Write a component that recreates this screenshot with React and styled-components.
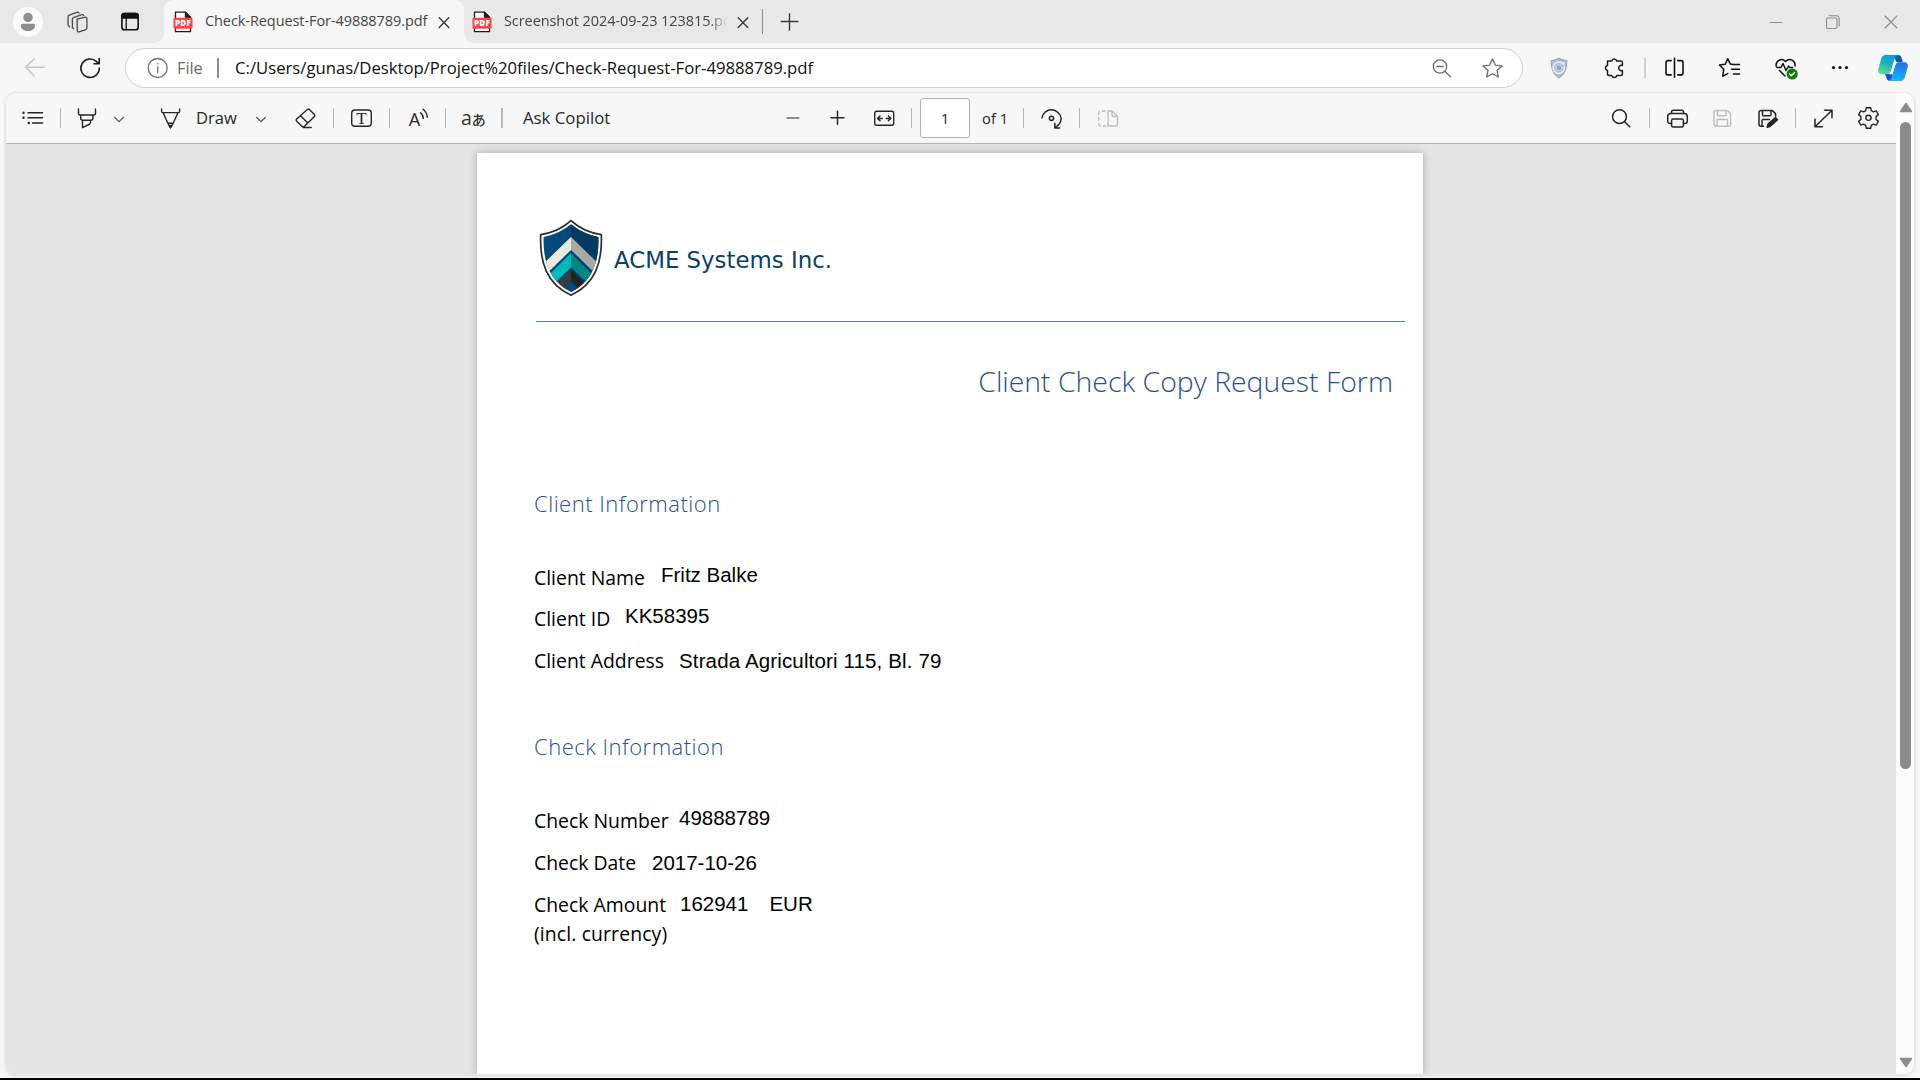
import React from "react";
import styled, { createGlobalStyle } from "styled-components";

const ui = '"Open Sans", "Noto Sans", sans-serif';

const Global = createGlobalStyle`
  * { box-sizing: border-box; }
  body { margin: 0; background: #f7f7f7; font-family: ${ui}; overflow: hidden; }
`;

const Window = styled.div`
  width: 1920px;
  height: 1080px;
  display: flex;
  flex-direction: column;
  background: #f7f7f7;
  border-bottom: 2px solid #000;
  overflow: hidden;
`;

const Icon = styled.svg`
  flex: none;
  width: ${(p) => p.$w || 24}px;
  height: ${(p) => p.$h || 24}px;
  margin-left: ${(p) => p.$ml || 0}px;
  margin-top: ${(p) => p.$mt || 0}px;
  fill: none;
  stroke: ${(p) => p.$c || "#262626"};
  stroke-width: ${(p) => p.$s || 1.4};
  stroke-linecap: round;
  stroke-linejoin: round;
  overflow: visible;
`;

const Divider = styled.div`
  flex: none;
  width: ${(p) => p.$w || 1}px;
  height: ${(p) => p.$h || 20}px;
  margin-left: ${(p) => p.$ml}px;
  background: ${(p) => p.$c || "#b8b8b8"};
`;

/* Tab strip */
const TabStrip = styled.header`
  height: 43px;
  flex: none;
  display: flex;
  align-items: center;
  background: #e8e8e8;
`;

const Avatar = styled.div`
  flex: none;
  width: 30px;
  height: 30px;
  margin-left: 13px;
  border-radius: 50%;
  background: #fbfbfb;
  display: flex;
`;

const Tab = styled.div`
  flex: none;
  display: flex;
  align-items: center;
  width: ${(p) => p.$w}px;
  height: 43px;
  margin-left: ${(p) => p.$ml || 0}px;
  border-radius: 9px 9px 0 0;
  background: ${(p) => (p.$active ? "#f7f7f7" : "transparent")};
  position: relative;
  &::before,
  &::after {
    content: "";
    display: ${(p) => (p.$active ? "block" : "none")};
    position: absolute;
    bottom: 0;
    width: 10px;
    height: 10px;
  }
  &::before {
    left: -10px;
    background: radial-gradient(circle at 0 0, #e8e8e8 9.5px, #f7f7f7 10px);
  }
  &::after {
    right: -10px;
    background: radial-gradient(circle at 100% 0, #e8e8e8 9.5px, #f7f7f7 10px);
  }
`;

const TabTitle = styled.span`
  flex: none;
  width: 224px;
  margin: 0 0 2px 12px;
  font-size: 14.5px;
  letter-spacing: -0.08px;
  line-height: 20px;
  color: #454545;
  white-space: nowrap;
  overflow: hidden;
  -webkit-mask-image: ${(p) => (p.$fade ? "linear-gradient(90deg, #000 205px, transparent 224px)" : "none")};
  mask-image: ${(p) => (p.$fade ? "linear-gradient(90deg, #000 205px, transparent 224px)" : "none")};
`;

/* Address row */
const AddressRow = styled.div`
  height: 49px;
  flex: none;
  display: flex;
  align-items: center;
`;

const AddressBar = styled.div`
  flex: none;
  display: flex;
  align-items: center;
  width: 1398px;
  height: 40px;
  margin-left: 22px;
  border: 1px solid #cfcfcf;
  border-radius: 20px;
  background: #fff;
`;

const AddressText = styled.span`
  flex: none;
  width: ${(p) => p.$w}px;
  margin-left: ${(p) => p.$ml}px;
  font-size: ${(p) => p.$fs || 16.7}px;
  line-height: 24px;
  color: ${(p) => p.$c};
  white-space: nowrap;
`;

/* PDF viewer */
const Viewer = styled.main`
  flex: none;
  display: flex;
  width: 1910px;
  height: 983px;
  margin-left: 5px;
  border-radius: 11px;
  overflow: hidden;
  border: 1px solid #e6e6e6;
  box-shadow: 0 1px 3px rgba(0, 0, 0, 0.12);
`;

const ViewerMain = styled.div`
  width: 1890px;
  display: flex;
  flex-direction: column;
`;

const Toolbar = styled.div`
  height: 51px;
  flex: none;
  display: flex;
  align-items: center;
  background: #f7f7f7;
  border-bottom: 1px solid #b4b4b4;
`;

const ToolText = styled.span`
  flex: none;
  width: ${(p) => p.$w}px;
  margin-left: ${(p) => p.$ml}px;
  font-size: ${(p) => p.$fs || 16.8}px;
  line-height: 24px;
  color: #262626;
  white-space: nowrap;
`;

const Translate = styled.span`
  flex: none;
  display: flex;
  align-items: baseline;
  width: 24px;
  margin-left: 15px;
  font: 400 19.5px/24px "Open Sans", sans-serif;
  color: #333;
  small {
    font: 500 14px/24px "Noto Sans CJK JP", sans-serif;
  }
`;

const PageInput = styled.div`
  flex: none;
  width: 50px;
  height: 40px;
  margin-left: 8px;
  border: 1px solid #b0b0b0;
  border-radius: 3px;
  background: #fff;
  font-size: 15px;
  line-height: 39px;
  text-align: center;
  color: #262626;
`;

const Canvas = styled.div`
  flex: 1;
  display: flex;
  justify-content: center;
  align-items: stretch;
  padding: 9px 2px 0 0;
  background: #e5e5e5;
  overflow: hidden;
`;

const ScrollTrack = styled.div`
  flex: 1;
  display: flex;
  flex-direction: column;
  align-items: center;
  padding: 9px 0 6px 1px;
  background: #fcfcfc;
`;

const Thumb = styled.div`
  width: 11px;
  height: 647px;
  margin: 9px 0 auto;
  border-radius: 6px;
  background: #8b8b8b;
`;

/* Document page */
const Page = styled.article`
  width: 946px;
  padding: 66px 17px 0 57px;
  background: #fff;
  box-shadow: 0 0 8px rgba(0, 0, 0, 0.28);
`;

const Brand = styled.div`
  display: flex;
  align-items: flex-start;
  height: 102px;
  padding-left: 6px;
`;

const BrandName = styled.div`
  margin: 21px 0 0 12px;
  font: 22.85px/40px "DejaVu Sans", sans-serif;
  color: #0a3f66;
  white-space: nowrap;
`;

const Rule = styled.div`
  height: 1px;
  margin: 0 1px 0 2px;
  background: #4f7bc0;
`;

const Title = styled.h1`
  margin: 39px 13px 0 0;
  font: 300 28.4px/40px ${ui};
  color: #2a5093;
  text-align: right;
  white-space: nowrap;
`;

const Heading = styled.h2`
  margin: ${(p) => p.$mt}px 0 45px;
  font: 300 22px/30px ${ui};
  letter-spacing: 0.5px;
  color: #2a5093;
`;

const Field = styled.div`
  display: flex;
  align-items: flex-start;
  height: ${(p) => p.$h}px;
`;

const Label = styled.div`
  width: ${(p) => p.$w}px;
  font: 400 19.4px/30px ${ui};
  letter-spacing: ${(p) => p.$ls || 0}px;
  color: #000;
  white-space: nowrap;
`;

const Value = styled.div`
  margin-top: ${(p) => -p.$lift || 0}px;
  margin-right: 21px;
  font: 20.5px/30px "Liberation Sans", Arial, sans-serif;
  letter-spacing: ${(p) => p.$ls || 0}px;
  color: #000;
  white-space: nowrap;
`;

function PdfIcon({ ml }) {
  return (
    <Icon $w={20} $h={22} $ml={ml} viewBox="0 0 20 22">
      <path d="M2.5 1.2h10l5 5v14.5h-15z" fill="#fff" stroke="#1c1c1c" strokeWidth="1.3" />
      <path d="M12.3 1.2v5.2h5.2z" fill="#1c1c1c" stroke="#1c1c1c" strokeWidth="1" />
      <rect x="0.5" y="6.7" width="19" height="11" rx="1.2" fill="#fb4446" stroke="none" />
      <text x="10" y="15.1" fill="#fff" stroke="none" fontFamily="Open Sans, sans-serif" fontSize="8" fontWeight="800" textAnchor="middle" letterSpacing="0.3">PDF</text>
    </Icon>
  );
}

const Close = ({ ml, c = "#3a3a3a" }) => (
  <Icon $w={12} $h={12} $ml={ml} $c={c} viewBox="0 0 12 12">
    <path d="M1.2 1.8l9.6 9.6M10.8 1.8L1.2 11.4" />
  </Icon>
);

const Chevron = ({ ml }) => (
  <Icon $w={12} $h={12} $ml={ml} $s={1.2} $c="#555" viewBox="0 0 12 12">
    <path d="M1.5 5.3L6 9.6l4.5-4.3" />
  </Icon>
);

function ShieldLogo() {
  const outer = "M31 .7C38 7 49 13 61.3 14.6C62.5 43 55 64 31 75.3C7 64 -.5 43 .7 14.6C13 13 24 7 31 .7z";
  const inner = "M31 4.3C39 10.5 48 15 58.4 16.9C59 41 53 61 31 72C9 61 3 41 3.6 16.9C14 15 23 10.5 31 4.3z";
  return (
    <Icon $w={62} $h={76} $mt={1} viewBox="0 0 62 76">
      <defs>
        <clipPath id="shield"><path d={inner} /></clipPath>
        <clipPath id="half"><path d="M31 0h31v76H31z" /></clipPath>
      </defs>
      <path d={outer} fill="#fff" stroke="#2b2b2b" strokeWidth="1.7" />
      <g clipPath="url(#shield)" stroke="none">
        <path d="M0 0h62v76H0z" fill="#054a7c" />
        <path d="M31 17L0 47v13L31 30l31 30V47z" fill="#e9eade" />
        <path d="M31 33L0 64v13L31 47.5 62 77V64z" fill="#00b9b9" />
        <path d="M31 50L4 77h11L31 61l16 16h11z" fill="#3a3a3c" />
        <g clipPath="url(#half)">
          <path d="M31 0h31v76H31z" fill="#043b62" />
          <path d="M31 17v13l31 30V47z" fill="#a8aaa4" />
          <path d="M31 33v14.5L62 77V64z" fill="#008684" />
          <path d="M31 50v11l16 16h11z" fill="#222224" />
          <path d="M31 61v15h15z" fill="#054a7c" />
        </g>
      </g>
    </Icon>
  );
}

function Tabs() {
  return (
    <TabStrip>
      <Avatar>
        <Icon $w={30} $h={30} viewBox="0 0 30 30">
          <circle cx="15" cy="10.5" r="4.7" fill="#8e8e8e" stroke="none" />
          <path d="M9.3 16.8h11.4a1.5 1.5 0 0 1 1.5 1.6c0 3.2-3.2 5.6-7.2 5.6s-7.2-2.4-7.2-5.6a1.5 1.5 0 0 1 1.5-1.6z" fill="#8e8e8e" stroke="none" />
        </Icon>
      </Avatar>
      <Icon $ml={23} $c="#4a4a4a" $s={1.3} viewBox="0 0 24 24">
        <path d="M11.2 9.2l7.7-2a1.6 1.6 0 0 1 2 1.400v9.500c0 .7-.5 1.300-1.200 1.500l-6.500 2.300a1.500 1.500 0 0 1-2-1.400V10.700c0-.7-.6-1.300 0-1.500z" />
        <path d="M7.600 18.600l-1.200-.9V9.100c0-.7.4-1.300 1.100-1.500l8.300-2.900c.8-.3 1.500 0 1.900.7" />
        <path d="M3.600 16.800l-1.500-1.700V6.600c0-.7.4-1.300 1.100-1.500L11 2.300c.8-.3 1.600 0 2 .7" />
      </Icon>
      <Icon $ml={28} $c="#111" $s={1.6} viewBox="0 0 24 24">
        <rect x="3.9" y="3.500" width="16.300" height="16.300" rx="2.600" />
        <path d="M3.900 8V5.800a2.300 2.300 0 0 1 2.300-2.300h11.700a2.300 2.300 0 0 1 2.300 2.300V8z" fill="#111" />
        <path d="M8.200 8v11.500" strokeWidth="1.300" />
      </Icon>
      <Tab $active $w={300} $ml={22}>
        <PdfIcon ml={9} />
        <TabTitle>Check-Request-For-49888789.pdf</TabTitle>
        <Close ml={9} />
      </Tab>
      <Tab $w={298}>
        <PdfIcon ml={8} />
        <TabTitle $fade>Screenshot 2024-09-23 123815.pdf</TabTitle>
        <Close ml={9} />
      </Tab>
      <Divider $ml={0} $h={25} $c="#8e8e8e" />
      <Icon $w={18} $h={18} $ml={18} $s={1.4} $c="#3a3a3a" viewBox="0 0 18 18">
        <path d="M8.500.7v16.600M.2 8.500h16.600" />
      </Icon>
      <Icon $w={14} $h={14} $ml={970} $c="#8a8a8a" $s={1} viewBox="0 0 14 14">
        <path d="M1 7.500h12" />
      </Icon>
      <Icon $w={14} $h={14} $ml={43} $c="#8a8a8a" $s={1.1} viewBox="0 0 14 14">
        <rect x=".5" y="3" width="10.500" height="10.500" rx="1.500" />
        <path d="M3 .8h7.700a2.500 2.500 0 0 1 2.500 2.500V11" />
      </Icon>
      <Icon $w={14} $h={14} $ml={44} $c="#8a8a8a" $s={1.1} viewBox="0 0 14 14">
        <path d="M1 1l12 12M13 1L1 13" />
      </Icon>
    </TabStrip>
  );
}

function Address() {
  return (
    <AddressRow>
      <Icon $ml={23} $c="#c4c4c4" $s={1.5} viewBox="0 0 24 24">
        <path d="M21.500 11.300H2.500M11 3L2.500 11.300 11 19.700" />
      </Icon>
      <Icon $ml={31} $w={25} $c="#1c1c1c" $s={1.6} viewBox="0 0 25 24">
        <path d="M21.300 12a9.200 9.200 0 1 1-3-6.600l2.500 2.300M21.200 2.600v5.200H16" />
      </Icon>
      <AddressBar>
        <Icon $ml={20} $c="#6e6e6e" $s={1.3} viewBox="0 0 24 24">
          <circle cx="11.700" cy="12" r="9.500" />
          <path d="M11.700 11v5.500" />
          <circle cx="11.700" cy="7.800" r=".8" fill="#6e6e6e" stroke="none" />
        </Icon>
        <AddressText $c="#6a6a6a" $w={27} $ml={7} $fs={16.3}>File</AddressText>
        <Divider $ml={13} $w={2} $c="#8c8c8c" />
        <AddressText $c="#101010" $w={590} $ml={16}>C:/Users/gunas/Desktop/Project%20files/Check-Request-For-49888789.pdf</AddressText>
        <Icon $ml={605} $c="#6a6a6a" $s={1.3} viewBox="0 0 24 24">
          <circle cx="10" cy="10.500" r="6.700" />
          <path d="M15 15.400l5.600 5.400M6.800 10.500h6.400" />
        </Icon>
        <Icon $ml={27} $c="#6a6a6a" $s={1.3} viewBox="0 0 24 24">
          <path d="M11.500 3l2.800 6.100 6.700.8-5 4.500 1.300 6.600-5.800-3.300L5.700 21 7 14.400 2 9.900l6.700-.8z" />
        </Icon>
      </AddressBar>
      <Icon $ml={24} viewBox="0 0 24 24">
        <path d="M12 2.200c2.600 1.600 5 2.200 7.800 2.400.3 8-1.500 13.500-7.800 17.400-6.300-3.900-8.100-9.400-7.800-17.400 2.800-.2 5.200-.8 7.800-2.400z" fill="#b3bdd3" stroke="#98a6c4" strokeWidth="1.2" />
        <path d="M17.400 10.500a5.700 5.700 0 1 1-3-3.800" stroke="#eef1f7" strokeWidth="1.600" />
        <circle cx="12" cy="11.800" r="3" fill="#94a2c2" stroke="#dfe4ef" strokeWidth=".8" />
        <circle cx="16.300" cy="7.500" r="1.400" fill="#eef1f7" stroke="none" />
      </Icon>
      <Icon $ml={31} $c="#1c1c1c" $s={1.5} viewBox="0 0 24 24">
        <path d="M5.500 5h4.300a2.500 2.500 0 0 1 4.900 0h4.200c.8 0 1.500.6 1.500 1.400v3.100a2.700 2.700 0 1 0 0 5v3.600c0 .8-.7 1.500-1.500 1.500h-4.200a2.500 2.500 0 0 1-4.900 0H7c-.9 0-1.500-.7-1.500-1.500v-3.700a2.500 2.500 0 0 1 0-4.900z" />
      </Icon>
      <Divider $ml={18} $w={2} $c="#cfcfcf" />
      <Icon $ml={17} $c="#111" $s={1.6} viewBox="0 0 24 24">
        <path d="M11.500 2.200v19M8.200 4.600H5a2 2 0 0 0-2 2v10.300a2 2 0 0 0 2 2h3.200M14.800 4.600H18a2 2 0 0 1 2 2v10.300a2 2 0 0 1-2 2h-3.200" />
      </Icon>
      <Icon $ml={31} $c="#111" $s={1.5} viewBox="0 0 24 24">
        <path d="M15 8.400l-2.600-.3L9.700 2.700 7.200 8.300l-5.700.7 4.200 4.200L4.700 20.300l5-2.700M15.500 8.400h6M13.500 13.200h8M15.500 18h6" />
      </Icon>
      <Icon $ml={32} $c="#111" $s={1.5} viewBox="0 0 24 24">
        <path d="M2.200 10.200C1.200 5.500 7.400 1 11.500 5.400 15.600 1 21.800 5 21 10M3 11.500h4l2-4 3 7 2.500-4.500 1 1.500h3M5.500 14.500l5.500 5.500" />
        <circle cx="18.200" cy="18" r="5.600" fill="#107c10" stroke="none" />
        <path d="M15.700 18.100l1.700 1.700 3.200-3.200" stroke="#fff" strokeWidth="1.400" />
      </Icon>
      <Icon $ml={30} viewBox="0 0 24 24">
        <g fill="#111" stroke="none">
          <circle cx="5.500" cy="11.600" r="1.600" />
          <circle cx="12" cy="11.600" r="1.600" />
          <circle cx="18.500" cy="11.600" r="1.600" />
        </g>
      </Icon>
      <Icon $ml={26} $w={30} $h={26} viewBox="0 0 30 26">
        <defs>
          <linearGradient id="cpL" x1="0.600" y1="0" x2="0.200" y2="1">
            <stop offset="0" stopColor="#0f9bdc" />
            <stop offset=".45" stopColor="#1fb0c0" />
            <stop offset="1" stopColor="#5fe08c" />
          </linearGradient>
          <linearGradient id="cpR" x1="0.700" y1="0" x2="0.500" y2="1">
            <stop offset="0" stopColor="#2a6fe0" />
            <stop offset="1" stopColor="#15b8fb" />
          </linearGradient>
        </defs>
        <path d="M14 0h6c2 0 3 1.200 3.600 3l1.200 4.300h-6z" fill="#0b5f9e" stroke="none" />
        <path d="M7 19h7l2 7h-3.500c-2.500 0-3.500-1.500-4.200-3.500z" fill="#1f47e0" stroke="none" />
        <path d="M7.500 0h12.300c-1.800.3-2.700 1.600-3.400 4l-3.100 11c-.8 2.700-2.200 4.300-5 4.300H4c-3 0-4.500-2-3.700-5L3.300 3.500C4 1.200 5.200 0 7.500 0z" fill="url(#cpL)" stroke="none" />
        <path d="M22.500 26H10.200c1.800-.3 2.700-1.600 3.400-4l3.100-10.700c.8-2.700 2.200-4 5-4H26c3 0 4.500 2 3.700 5l-3 10.200c-.7 2.300-1.900 3.500-4.200 3.500z" fill="url(#cpR)" stroke="none" />
        <path d="M12.600 17.500l2.500-8.300c.5-1.500 1.600-2.200 3.700-2-.9 1-1.300 2.200-1.700 3.600l-2.200 7.300c-.4 1.300-1.300 1.500-3.200 1.400.4-.6.700-1.300.9-2z" fill="#effcff" stroke="none" />
      </Icon>
    </AddressRow>
  );
}

function Tools() {
  return (
    <Toolbar>
      <Icon $ml={14} viewBox="0 0 24 24">
        <path d="M8 6.700h14.500M8 11.800h14.500M12.500 17h10" strokeWidth="1.500" />
        <g fill="#262626" stroke="none">
          <circle cx="3.500" cy="6.700" r="1.200" />
          <circle cx="3.500" cy="11.800" r="1.200" />
          <circle cx="8.800" cy="17" r="1.200" />
        </g>
      </Icon>
      <Divider $ml={16} />
      <Icon $ml={14} viewBox="0 0 24 24">
        <path d="M3.500 3v4.500c0 .9.600 1.500 1.500 1.500h14c.9 0 1.500-.6 1.500-1.500V3M5.700 9v3.300c0 1.100.9 1.900 2 1.900h8.200c1.100 0 2-.8 2-1.900V9M7.500 14.400v7.300l6.500-3.200c1-.5 1.500-1.300 1.500-2.300v-1.800" />
      </Icon>
      <Chevron ml={14} />
      <Icon $ml={33} viewBox="0 0 24 24">
        <path d="M3.600 3v2.600c0 .6.400 1 1 1h16c.6 0 1-.4 1-1V3M5.200 6.800l4.600 10.400 2.700 4.600 2.700-4.600L20 6.800M9.800 17.200h5.400" />
        <path d="M11.300 19.600h2.400l-1.200 2z" fill="#262626" />
      </Icon>
      <ToolText $ml={14} $w={40} $fs={16.6}>Draw</ToolText>
      <Chevron ml={19} />
      <Icon $ml={26} viewBox="0 0 24 24">
        <path d="M14.300 3.500c.6-.6 1.500-.6 2.100 0l5 5c.6.6.6 1.500 0 2.100L11.500 20.300c-.8.8-1.800.8-2.600 0l-5.200-5.100c-.7-.7-.7-1.600 0-2.300zM7.500 9.800l7.300 7.300M10.200 21.500h8" />
      </Icon>
      <Divider $ml={16} />
      <Icon $ml={15} viewBox="0 0 24 24">
        <rect x="2.700" y="4" width="19.600" height="16.300" rx="3.200" />
        <text x="12.500" y="18" fill="#262626" stroke="none" fontFamily="Liberation Serif, serif" fontSize="17" textAnchor="middle">T</text>
      </Icon>
      <Divider $ml={16} />
      <Icon $ml={16} viewBox="0 0 24 24">
        <text x="2.700" y="19.800" fill="#262626" stroke="none" fontFamily="Open Sans, sans-serif" fontSize="19" textLength="11.500" lengthAdjust="spacingAndGlyphs">A</text>
        <path d="M14.500 6.700a7 7 0 0 1 2.800 5.700M17 3.300c2.700 2 4 4.600 4.300 8" />
      </Icon>
      <Divider $ml={15} />
      <Translate>a<small>あ</small></Translate>
      <Divider $ml={16} $w={2} />
      <ToolText $ml={20} $w={88}>Ask Copilot</ToolText>
      <Icon $ml={170} $c="#6a6a6a" $s={1.6} viewBox="0 0 24 24">
        <path d="M6.200 12h11.600" />
      </Icon>
      <Icon $ml={20} $s={1.5} viewBox="0 0 24 24">
        <path d="M6 11.700h13M12.500 5.200v13" />
      </Icon>
      <Icon $ml={23} viewBox="0 0 24 24">
        <rect x="2.700" y="5.200" width="19" height="14" rx="2" />
        <path d="M10.200 12.400H5.700M8 10l-2.400 2.400L8 14.800M14.200 12.400h4.500M16.400 10l2.400 2.400-2.400 2.400" strokeWidth="1.500" />
      </Icon>
      <Divider $ml={15} />
      <PageInput>1</PageInput>
      <ToolText $ml={12} $w={26} $fs={14.8}>of 1</ToolText>
      <Divider $ml={15} />
      <Icon $ml={15} $s={1.5} viewBox="0 0 24 24">
        <path d="M2.900 11.900A9.700 9.700 0 0 1 22.100 12.500C22.100 16.200 20 19.300 16.200 21.300M20.600 21.900h-4.800v-4.600" />
        <circle cx="12.500" cy="12.300" r="2.100" />
      </Icon>
      <Divider $ml={16} />
      <Icon $ml={16} $c="#bdbdbd" viewBox="0 0 24 24">
        <path d="M12 5v15h7.500c1.100 0 2-.9 2-2v-7.500L16 5zM16 5v3.500c0 1.100.9 2 2 2h3.500" />
        <path d="M9.500 5H4.700a2 2 0 0 0-2 2v11a2 2 0 0 0 2 2h4.800" strokeDasharray="3 3" />
      </Icon>
      <Icon $ml={489} $s={1.5} viewBox="0 0 24 24">
        <circle cx="10.500" cy="10.700" r="6.900" />
        <path d="M15.600 15.700l5.200 5.100" />
      </Icon>
      <Divider $ml={16} />
      <Icon $ml={15} $s={1.5} viewBox="0 0 24 24">
        <path d="M6.500 7.500V6c0-1 .8-1.800 1.800-1.800h8.400c1 0 1.800.8 1.800 1.800v1.500M6.500 17.500H5a2.300 2.300 0 0 1-2.300-2.300v-4.700a3 3 0 0 1 3-3h13.600a3 3 0 0 1 3 3v4.700a2.300 2.300 0 0 1-2.300 2.300h-1.500" />
        <rect x="6.600" y="13" width="11.800" height="8" rx="1.500" />
      </Icon>
      <Icon $ml={21} $c="#bdbdbd" viewBox="0 0 24 24">
        <path d="M6 4.500h10.600c.5 0 1 .2 1.400.6l2 2c.4.4.6.9.6 1.400V18.300a2 2 0 0 1-2 2H6a2 2 0 0 1-2-2V6.500a2 2 0 0 1 2-2zM7.500 4.700v4c0 .6.5 1 1 1h6.500c.6 0 1-.4 1-1v-4M7 20v-5.500c0-.6.4-1 1-1h8.500c.6 0 1 .4 1 1V20" />
      </Icon>
      <Icon $ml={21} $s={1.5} viewBox="0 0 24 24">
        <path d="M8.500 20.300H6a2 2 0 0 1-2-2V6.500a2 2 0 0 1 2-2h10.600c.5 0 1 .2 1.400.6l2 2c.4.4.6.9.6 1.400v1.700M7.500 4.700v4c0 .6.5 1 1 1h6.500c.6 0 1-.4 1-1v-4M7 20v-5.500c0-.6.4-1 1-1h6.500" />
        <path d="M12.200 21.300l1-3.600 7.300-6.200 2 2.200-7.200 6.500z" fill="#262626" />
      </Icon>
      <Divider $ml={16} />
      <Icon $ml={15} $s={1.5} viewBox="0 0 24 24">
        <path d="M4 20.800L21 4.300M13.500 4.300H21v7.500M4 13.300v7.500h7.500" />
      </Icon>
      <Icon $ml={21} viewBox="0 0 24 24">
        <path d="M10.300 1.700h4.400l.6 3 2 1.200 2.900-1 2.200 3.700-2.300 2v2.800l2.300 2-2.200 3.700-2.900-1-2 1.200-.6 3h-4.400l-.6-3-2-1.200-2.900 1-2.200-3.700 2.300-2v-2.800l-2.300-2 2.200-3.700 2.900 1 2-1.200z" />
        <circle cx="12.500" cy="11.800" r="2.600" />
      </Icon>
    </Toolbar>
  );
}

function Document() {
  return (
    <Page>
      <Brand>
        <ShieldLogo />
        <BrandName>ACME Systems Inc.</BrandName>
      </Brand>
      <Rule />
      <Title>Client Check Copy Request Form</Title>
      <Heading $mt={87}>Client Information</Heading>
      <Field $h={41}><Label $w={127}>Client Name</Label><Value $lift={3}>Fritz Balke</Value></Field>
      <Field $h={42}><Label $w={91}>Client ID</Label><Value $lift={3}>KK58395</Value></Field>
      <Field $h={30}><Label $w={145}>Client Address</Label><Value $ls={0.14}>Strada Agricultori 115, Bl. 79</Value></Field>
      <Heading $mt={55}>Check Information</Heading>
      <Field $h={42}><Label $w={145}>Check Number</Label><Value $lift={3}>49888789</Value></Field>
      <Field $h={42}><Label $w={118}>Check Date</Label><Value>2017-10-26</Value></Field>
      <Field $h={29}><Label $w={146}>Check Amount</Label><Value $lift={1}>162941</Value><Value $lift={1}>EUR</Value></Field>
      <Field $h={30}><Label $ls={0.12}>(incl. currency)</Label></Field>
    </Page>
  );
}

export default function App() {
  return (
    <Window>
      <Global />
      <Tabs />
      <Address />
      <Viewer>
        <ViewerMain>
          <Tools />
          <Canvas><Document /></Canvas>
        </ViewerMain>
        <ScrollTrack>
          <Icon $w={14} $h={11} viewBox="0 0 14 11">
            <path d="M7 1.500L12.500 9.500h-11z" fill="#8b8b8b" stroke="#8b8b8b" />
          </Icon>
          <Thumb />
          <Icon $w={14} $h={11} viewBox="0 0 14 11">
            <path d="M7 9.500L12.500 1.500h-11z" fill="#8b8b8b" stroke="#8b8b8b" />
          </Icon>
        </ScrollTrack>
      </Viewer>
    </Window>
  );
}
